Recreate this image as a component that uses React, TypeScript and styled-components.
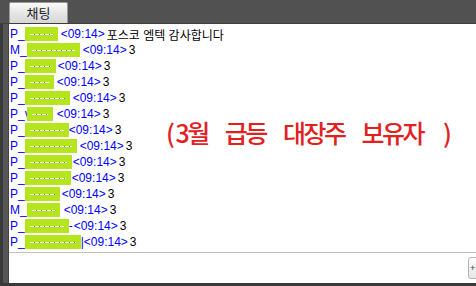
import styled, { createGlobalStyle } from "styled-components";

type Line = {
  prefix: string;
  mask: number;
  gap: number;
  tail?: string;
  message: string;
};

const lines: Line[] = [
  { prefix: "P_", mask: 33, gap: 3, message: "포스코 엠텍 감사합니다" },
  { prefix: "M_", mask: 53, gap: 3, message: "3" },
  { prefix: "P_", mask: 31, gap: 2, message: "3" },
  { prefix: "P_", mask: 29, gap: 3, message: "3" },
  { prefix: "P_", mask: 45, gap: 3, message: "3" },
  { prefix: "P_v", mask: 26, gap: 4, message: "3" },
  { prefix: "P_", mask: 44, gap: 0, message: "3" },
  { prefix: "P_", mask: 52, gap: 3, message: "3" },
  { prefix: "P_", mask: 47, gap: 1, message: "3" },
  { prefix: "P_", mask: 46, gap: 1, message: "3" },
  { prefix: "P_", mask: 35, gap: 2, message: "3" },
  { prefix: "M_", mask: 33, gap: 4, message: "3" },
  { prefix: "P_", mask: 44, gap: 1, tail: "-", message: "3" },
  { prefix: "P_", mask: 56, gap: 0, tail: "|", message: "3" },
];

const App = () => {
  return (
    <>
      <GlobalStyle />
      <Frame>
        <TabBar>
          <Tab>채팅</Tab>
        </TabBar>
        <Body>
          <Rail />
          <Panel>
            <ChatLog>
              {lines.map((l, i) => (
                <Row key={i}>
                  <Nick>{l.prefix}</Nick>
                  <Mask $w={l.mask} $shift={l.prefix === "P_v" ? -4 : 0} />
                  {l.tail && <Nick>{l.tail}</Nick>}
                  <Time $gap={l.gap}>&lt;09:14&gt;</Time>
                  <Message>{l.message}</Message>
                </Row>
              ))}
              <Note>
                <Open>(</Open>3월 급등 대장주 보유자<Paren>)</Paren>
              </Note>
            </ChatLog>
            <InputRow>
              <SendButton>+</SendButton>
            </InputRow>
          </Panel>
        </Body>
        <BottomEdge />
      </Frame>
    </>
  );
};

const GlobalStyle = createGlobalStyle`
  html, body {
    margin: 0;
    padding: 0;
    width: 476px;
    height: 286px;
    overflow: hidden;
    background: #4f4f4f;
  }
`;

const Frame = styled.div`
  display: flex;
  flex-direction: column;
  width: 476px;
  height: 286px;
  background: #4f4f4f;
`;

const TabBar = styled.div`
  height: 24px;
  box-sizing: border-box;
  padding: 3px 0 0 9px;
  border-bottom: 1px solid #3e3e3e;
  display: flex;
  align-items: flex-end;
  background: #515151;
`;

const Tab = styled.div`
  width: 59px;
  height: 21px;
  box-sizing: border-box;
  border: 1px solid #9a9a9a;
  border-bottom: none;
  border-radius: 2px 2px 0 0;
  background: linear-gradient(#fafafa, #e4e4e4 55%, #d6d6d6);
  color: #222;
  font-family: "Noto Sans CJK KR", sans-serif;
  font-size: 13px;
  line-height: 20px;
  text-align: center;
`;

const Body = styled.div`
  flex: 1;
  display: flex;
  min-height: 0;
`;

const Rail = styled.div`
  width: 9px;
  background: linear-gradient(90deg, #3a3a3a 0 3px, #565656 3px 8px, #444 8px);
`;

const Panel = styled.div`
  flex: 1;
  display: flex;
  flex-direction: column;
  background: #fff;
  overflow: hidden;
`;

const ChatLog = styled.div`
  position: relative;
  height: 229px;
  box-sizing: border-box;
  padding: 2px 0 0 1px;
  border-bottom: 1px solid #c0c0c0;
`;

const Row = styled.div`
  display: flex;
  align-items: center;
  height: 16px;
  font-family: "Liberation Sans", "Noto Sans CJK KR", sans-serif;
  font-size: 12px;
  white-space: nowrap;
`;

const Nick = styled.span`
  color: #0000ff;
`;

const Mask = styled.span<{ $w: number; $shift: number }>`
  display: inline-block;
  width: ${(p) => p.$w}px;
  height: 14px;
  margin-left: ${(p) => p.$shift}px;
  background:
    repeating-linear-gradient(90deg, #ffffff 0 4px, #6a6aff 4px 5px) center / calc(100% - 10px) 1px no-repeat,
    #b5e61d;
`;

const Time = styled.span<{ $gap: number }>`
  color: #0000ff;
  margin-left: ${(p) => p.$gap}px;
`;

const Message = styled.span`
  color: #000;
  margin-left: 2px;
`;

const Note = styled.div`
  position: absolute;
  left: 157px;
  top: 93px;
  color: #e2211f;
  font-family: "Noto Sans CJK KR", sans-serif;
  font-weight: 500;
  font-size: 25px;
  line-height: 30px;
  letter-spacing: -2.5px;
  word-spacing: 14px;
  white-space: nowrap;
`;

const Open = styled.span`
  margin-right: 3px;
`;

const Paren = styled.span`
  margin-left: 20px;
`;

const InputRow = styled.div`
  flex: 1;
  display: flex;
  justify-content: flex-end;
  align-items: center;
`;

const SendButton = styled.div`
  width: 24px;
  height: 22px;
  margin-right: -16px;
  box-sizing: border-box;
  border: 1px solid #b4b4b4;
  border-radius: 3px;
  background: linear-gradient(#fdfdfd, #e6e6e6);
  color: #444;
  font-family: "Liberation Sans", sans-serif;
  font-size: 9px;
  line-height: 20px;
  padding-left: 1px;
`;

const BottomEdge = styled.div`
  height: 3px;
  background: #3a3a3a;
`;

export default App;
